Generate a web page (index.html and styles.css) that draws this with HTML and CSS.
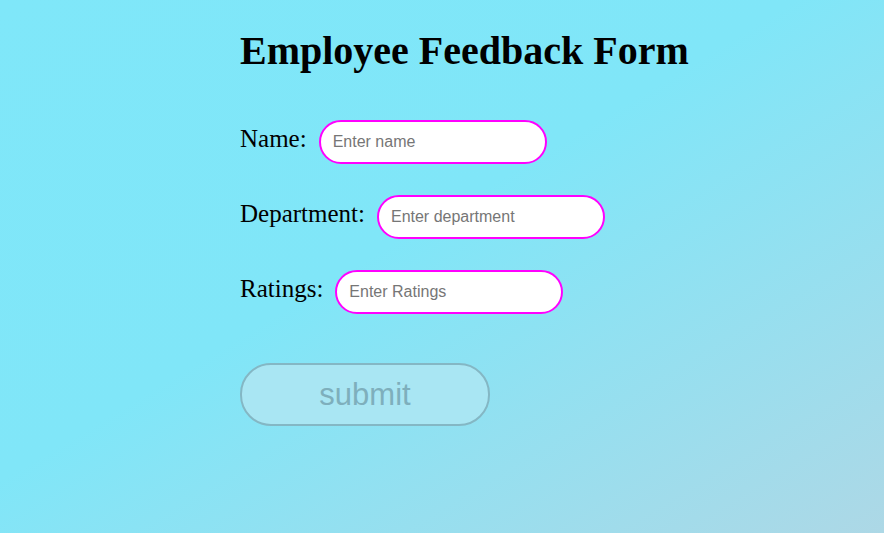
FILE: index.html
```html
<!DOCTYPE html>
<html>
<head>
<meta charset="utf-8">
<link rel="stylesheet" href="styles.css">
</head>
<body>
<main class="page">
  <h1 class="title">Employee Feedback Form</h1>
  <form class="form">
    <div class="row">
      <label class="label" for="name">Name:</label>
      <input class="field" id="name" type="text" placeholder="Enter name">
    </div>
    <div class="row">
      <label class="label" for="dept">Department:</label>
      <input class="field" id="dept" type="text" placeholder="Enter department">
    </div>
    <div class="row">
      <label class="label" for="rating">Ratings:</label>
      <input class="field" id="rating" type="text" placeholder="Enter Ratings">
    </div>
    <button class="submit" type="button" disabled>submit</button>
  </form>
</main>
</body>
</html>
```

FILE: styles.css
```css
html, body {
  margin: 0;
  height: 100%;
}
body {
  background: linear-gradient(to bottom right, #7fe7f9 0%, #80e6f8 45%, #add8e6 100%);
  font-family: "Liberation Serif", "Times New Roman", serif;
  color: #000;
}
.page {
  padding: 26px 0 0 240px;
}
.title {
  margin: 0;
  font-size: 40px;
  font-weight: bold;
  line-height: 50px;
}
.form {
  display: flex;
  flex-direction: column;
  align-items: flex-start;
  margin-top: 44px;
}
.row {
  display: flex;
  align-items: center;
  gap: 12px;
  margin-bottom: 31px;
}
.label {
  font-size: 25px;
  line-height: 28px;
  position: relative;
  top: -3px;
}
.field {
  box-sizing: border-box;
  width: 228px;
  height: 44px;
  border: 2px solid #ff00ff;
  border-radius: 22px;
  background: #fff;
  padding: 0 12px;
  font-family: "Liberation Sans", Arial, sans-serif;
  font-size: 16px;
  outline: none;
}
.field::placeholder {
  color: #767676;
}
.submit {
  box-sizing: border-box;
  margin-top: 18px;
  width: 250px;
  height: 63px;
  border: 2px solid #84b7c4;
  border-radius: 31px;
  background: #a9e6f3;
  color: #7eafbc;
  font-family: "Liberation Sans", Arial, sans-serif;
  font-size: 31px;
  padding: 0;
}
```
